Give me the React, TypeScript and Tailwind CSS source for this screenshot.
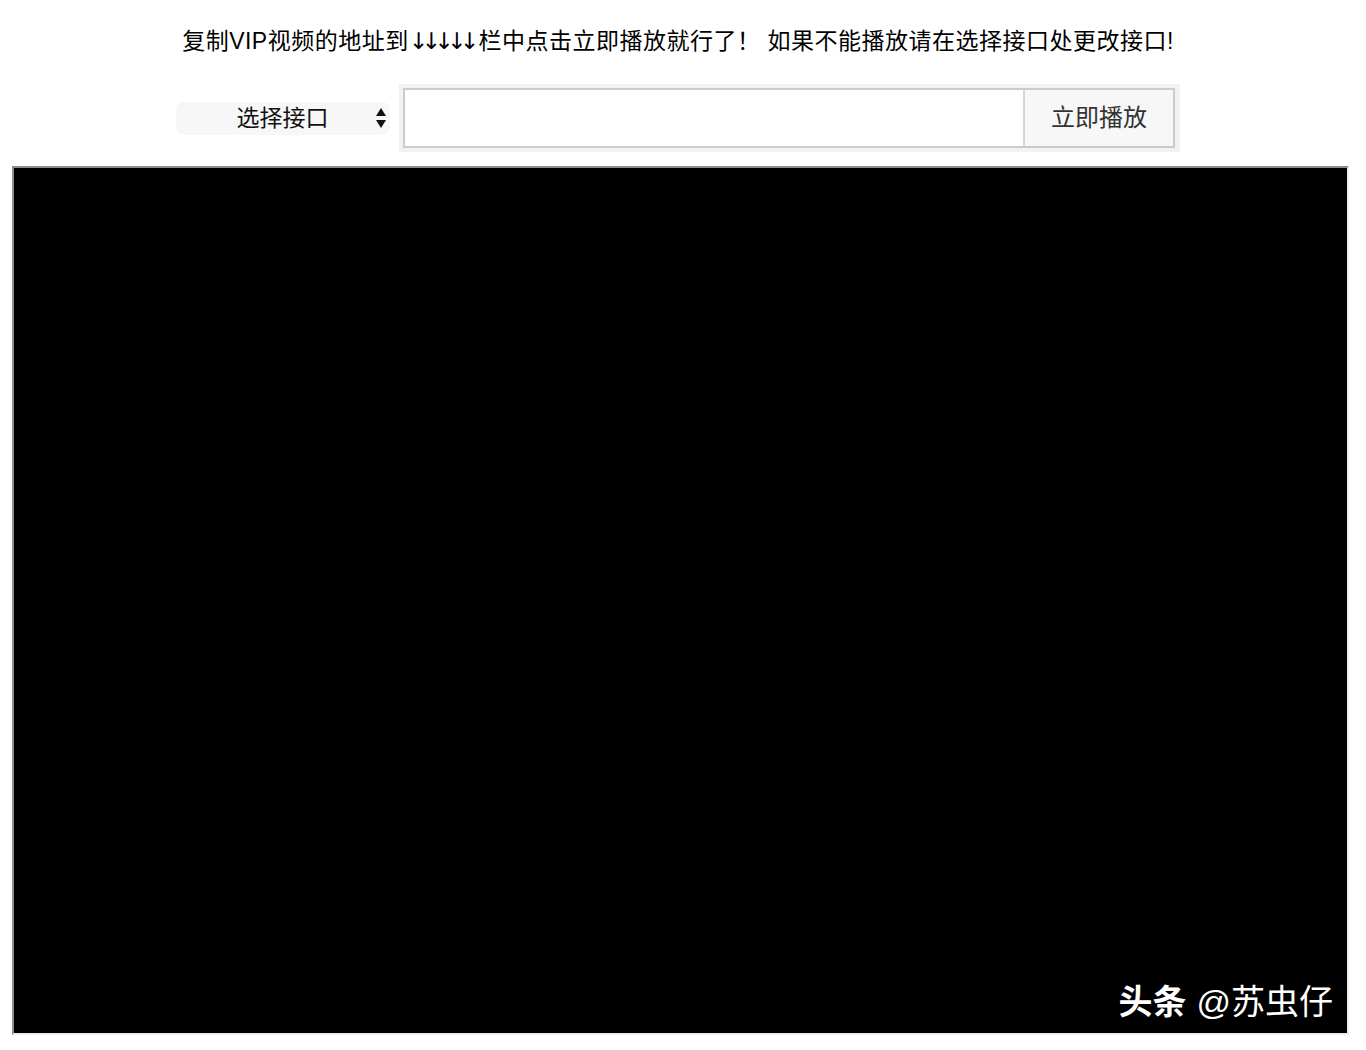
const font = { fontFamily: '"Liberation Sans", "Noto Sans CJK SC", sans-serif' };
const arrowFont = { fontFamily: '"DejaVu Sans", sans-serif' };

function SortArrows() {
  return (
    <svg width="12" height="22" viewBox="0 0 12 22" className="shrink-0">
      <path d="M6 1 L11 9 L1 9 Z" fill="#111" />
      <path d="M6 21 L11 13 L1 13 Z" fill="#111" />
    </svg>
  );
}

export default function App() {
  return (
    <div className="min-h-[1050px] w-[1366px] bg-white text-black" style={font}>
      <p className="w-[1356px] pt-[26px] text-center text-[23px] leading-[30px] tracking-[0.5px]">
        复制VIP视频的地址到
        <span className="text-black tracking-[-6.5px]" style={arrowFont}>
          ↓↓↓↓↓
        </span>
        <span className="ml-[6px]">栏中点击立即播放就行了！ 如果不能播放请在选择接口处更改接口!</span>
      </p>

      <div className="mt-[28px] flex w-[1356px] items-center justify-center">
        <div className="flex h-[33px] w-[214px] items-center rounded-[8px] bg-[#f7f7f7] pr-[3px]">
          <span className="flex-1 pl-[14px] text-center text-[23px] leading-none text-[#111]">选择接口</span>
          <SortArrows />
        </div>

        <div className="ml-[9px] flex h-[68px] w-[781px] bg-[#f2f2f2] p-[4px] pr-[5px]">
          <div className="flex flex-1 border-2 border-[#cbcbcb]">
            <input className="h-full flex-1 bg-white outline-none" type="text" />
            <button className="w-[150px] border-l-2 border-[#d6d6d6] bg-[#f7f7f7] text-[24px] text-[#333]">
              立即播放
            </button>
          </div>
        </div>
      </div>

      <div className="ml-[12px] mt-[14px] h-[869px] w-[1337px] border-2 border-t-[#8c8c8c] border-l-[#8c8c8c] border-r-[#ececec] border-b-[#ececec]">
        <div className="relative h-full w-full bg-black">
          <div className="absolute bottom-[14px] right-[14px] flex items-center gap-[10px] text-white">
            <span className="text-[34px] font-bold leading-none">头条</span>
            <span className="text-[34px] leading-none">@苏虫仔</span>
          </div>
        </div>
      </div>
    </div>
  );
}
